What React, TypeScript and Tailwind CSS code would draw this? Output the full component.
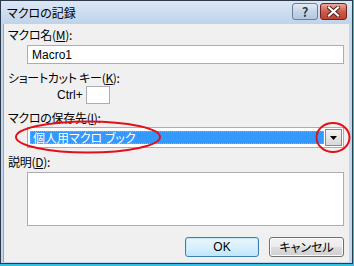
import React from "react";

const font = "font-['MS_UI_Gothic','Noto_Sans_CJK_JP',sans-serif]";

function Label({ pre, k, post = "):" }: { pre: string; k: string; post?: string }) {
  return (
    <div className="h-[14px] leading-[14px] text-[12px] text-black [font-feature-settings:'palt'] tracking-[-0.3px]">
      {pre}
      <span className="underline">{k}</span>
      {post}
    </div>
  );
}

export default function App() {
  return (
    <div className={`relative w-[354px] h-[266px] bg-[#33c0e8] ${font}`}>
      <div className="w-[353px] h-[264px] flex flex-col border border-[#2c3a4c] bg-[#c3d6ec]">
        {/* Title bar */}
        <div className="h-[23px] flex items-center pl-[6px] pr-[5px] bg-gradient-to-b from-[#dce7f4] to-[#bed3eb]">
          <div className="text-[12px] text-black leading-none [font-feature-settings:'palt']">マクロの記録</div>
          <div className="ml-auto flex gap-[2px] mt-[-2px]">
            <div className="w-[26px] h-[17px] rounded-[3px] border border-[#6d7d95] bg-gradient-to-b from-[#e2ebf5] via-[#c5d4e6] to-[#b4c7df] flex items-center justify-center text-[13px] font-bold text-[#2d3c50] leading-none [text-shadow:0_0_1px_#fff]">
              ?
            </div>
            <div className="w-[27px] h-[17px] rounded-[3px] border border-[#6b2424] bg-gradient-to-b from-[#e9a99a] via-[#cf5b48] to-[#c0412e] flex items-center justify-center">
              <svg width="13" height="11" viewBox="0 0 13 11">
                <path d="M2 1.5 L11 9.5 M11 1.5 L2 9.5" stroke="#4a1c1c" strokeWidth="4" strokeLinecap="square" />
                <path d="M2 1.5 L11 9.5 M11 1.5 L2 9.5" stroke="#ffffff" strokeWidth="2.2" strokeLinecap="square" />
              </svg>
            </div>
          </div>
        </div>
        {/* Client */}
        <div className="flex-1 ml-[2px] mr-[3px] mb-[1px] bg-[#f0f0f0] border-l border-[#8fa8c8] pl-[4px] pr-[5px] flex flex-col">
          <div className="mt-[4px]">
            <Label pre="マクロ名(" k="M" />
          </div>
          <div className="mt-[3px] ml-[19px] h-[19px] bg-white border border-[#abadb3] flex items-center pl-[4px] text-[12px] text-black font-['Liberation_Sans',sans-serif]">
            Macro1
          </div>
          <div className="mt-[7px]">
            <Label pre="ショートカット キー(" k="K" />
          </div>
          <div className="mt-[1px] flex items-center">
            <div className="ml-[49px] text-[12px] text-black font-['Liberation_Sans',sans-serif]">Ctrl+</div>
            <div className="ml-[3px] w-[24px] h-[18px] bg-white border border-[#abadb3]" />
          </div>
          <div className="mt-[7px]">
            <Label pre="マクロの保存先(" k="I" />
          </div>
          <div className="mt-[2px] ml-[19px] h-[21px] bg-white border border-[#abadb3] flex items-center p-[1px]">
            <div className="flex-1 h-[13px] mx-[1px] bg-[#3399ff] border border-dotted border-[#e89a4a] flex items-center pl-[2px] text-[12px] text-white leading-none [font-feature-settings:'palt']">
              個人用マクロ ブック
            </div>
            <div className="w-[17px] h-[17px] border border-[#8a8a8a] bg-gradient-to-b from-[#f4f4f4] to-[#d8d8d8] flex items-center justify-center">
              <svg width="7" height="4" viewBox="0 0 7 4">
                <path d="M0 0 H7 L3.5 4 Z" fill="#000" />
              </svg>
            </div>
          </div>
          <div className="mt-[7px]">
            <Label pre="説明(" k="D" />
          </div>
          <div className="mt-[3px] ml-[19px] h-[54px] bg-white border border-[#abadb3]" />
          <div className="mt-[11px] flex justify-end gap-[10px]">
            <div className="w-[74px] h-[20px] rounded-[3px] border border-[#3c7fb1] bg-gradient-to-b from-[#eaf6fd] via-[#d9f0fc] to-[#bee6fd] shadow-[inset_0_0_0_1px_#c2e8fa] flex items-center justify-center text-[12px] text-black font-['Liberation_Sans',sans-serif]">
              OK
            </div>
            <div className="w-[75px] h-[20px] rounded-[3px] border border-[#707070] bg-[linear-gradient(to_bottom,#f2f2f2_0%,#ebebeb_50%,#dddddd_51%,#cfcfcf_100%)] shadow-[inset_0_0_0_1px_#fafafa] flex items-center justify-center text-[12px] text-black [font-feature-settings:'palt']">
              キャンセル
            </div>
          </div>
        </div>
      </div>
      {/* Annotation ellipses */}
      <svg className="absolute left-0 top-0 pointer-events-none" width="354" height="266">
        <ellipse cx="88" cy="137" rx="72" ry="15.5" fill="none" stroke="#e3101a" strokeWidth="2" />
        <ellipse cx="333" cy="137.5" rx="16.5" ry="14.5" fill="none" stroke="#e3101a" strokeWidth="2" />
      </svg>
    </div>
  );
}
